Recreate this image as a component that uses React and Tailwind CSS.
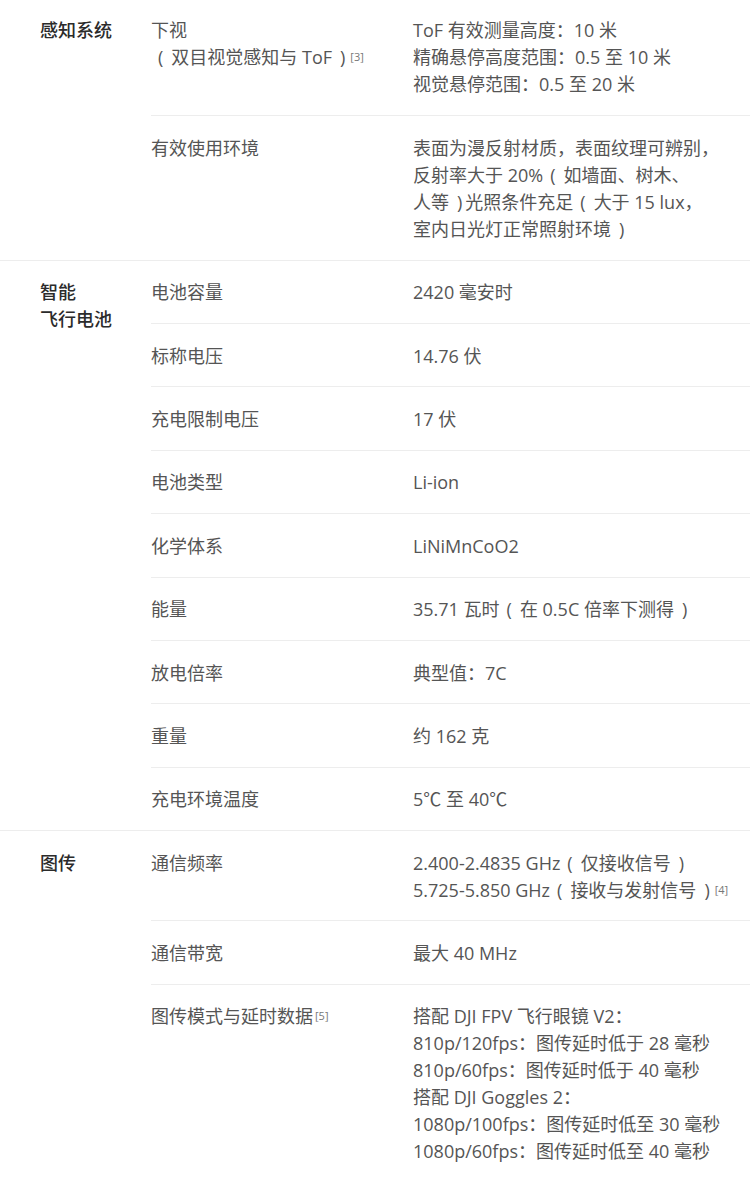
import React from 'react';

const font = { fontFamily: '"Open Sans", "Noto Sans CJK SC", sans-serif' };

function Sup({ n }) {
  return <sup className="text-[11px] text-[#777] ml-[2px] relative -top-[3px]">[{n}]</sup>;
}

// full-width parens drawn with the wide side spacing seen in the picture
function fmt(text) {
  if (typeof text !== 'string') return text;
  const parts = text.split(/([（）])/);
  return parts.map((p, i) => {
    if (p === '（') return <span key={i} className="pl-[7px] pr-[8px]">(</span>;
    if (p === '）') return <span key={i} className="pl-[8px] pr-[3px]">)</span>;
    return <React.Fragment key={i}>{p}</React.Fragment>;
  });
}

const sections = [
  {
    title: ['感知系统'],
    first: true,
    rows: [
      {
        label: ['下视', <>{fmt('（双目视觉感知与 ToF）')}<Sup n={3} /></>],
        value: ['ToF 有效测量高度：10 米', '精确悬停高度范围：0.5 至 10 米', '视觉悬停范围：0.5 至 20 米'],
      },
      {
        label: ['有效使用环境'],
        value: ['表面为漫反射材质，表面纹理可辨别，', '反射率大于 20%（如墙面、树木、', '人等）光照条件充足（大于 15 lux，', '室内日光灯正常照射环境）'],
      },
    ],
  },
  {
    title: ['智能', '飞行电池'],
    rows: [
      { label: ['电池容量'], value: ['2420 毫安时'] },
      { label: ['标称电压'], value: ['14.76 伏'] },
      { label: ['充电限制电压'], value: ['17 伏'] },
      { label: ['电池类型'], value: ['Li-ion'] },
      { label: ['化学体系'], value: ['LiNiMnCoO2'] },
      { label: ['能量'], value: ['35.71 瓦时（在 0.5C 倍率下测得）'] },
      { label: ['放电倍率'], value: ['典型值：7C'] },
      { label: ['重量'], value: ['约 162 克'] },
      { label: ['充电环境温度'], value: ['5℃ 至 40℃'] },
    ],
  },
  {
    title: ['图传'],
    last: true,
    rows: [
      {
        label: ['通信频率'],
        value: ['2.400-2.4835 GHz（仅接收信号）', <>{fmt('5.725-5.850 GHz（接收与发射信号）')}<Sup n={4} /></>],
      },
      { label: ['通信带宽'], value: ['最大 40 MHz'] },
      {
        label: [<>图传模式与延时数据<Sup n={5} /></>],
        value: [
          '搭配 DJI FPV 飞行眼镜 V2：',
          '810p/120fps：图传延时低于 28 毫秒',
          '810p/60fps：图传延时低于 40 毫秒',
          '搭配 DJI Goggles 2：',
          '1080p/100fps：图传延时低至 30 毫秒',
          '1080p/60fps：图传延时低至 40 毫秒',
        ],
      },
    ],
  },
];

function Lines({ items }) {
  return items.map((t, i) => (
    <div key={i} className="whitespace-nowrap">{fmt(t)}</div>
  ));
}

export default function App() {
  return (
    <div className="w-[750px] bg-white text-[18px] leading-[27px]" style={font}>
      {sections.map((s, si) => (
        <div
          key={si}
          className={`flex ${s.last ? '' : 'border-b border-[#ededed]'}`}
        >
          <div className={`w-[151px] pl-[40px] ${s.first ? 'pt-[16.5px]' : 'pt-[18.6px]'} text-[#2b2b2b] font-medium`}>
            <Lines items={s.title} />
          </div>
          <div className="flex-1 flex flex-col divide-y divide-[#ededed]">
            {s.rows.map((r, ri) => (
              <div
                key={ri}
                className={`flex ${s.first && ri === 0 ? 'pt-[16.5px] pb-[17.7px]' : 'pt-[18.6px] pb-[16.8px]'}`}
              >
                <div className="w-[262px] text-[#555]">
                  <Lines items={r.label} />
                </div>
                <div className="flex-1 text-[#555]">
                  <Lines items={r.value} />
                </div>
              </div>
            ))}
          </div>
        </div>
      ))}
    </div>
  );
}
